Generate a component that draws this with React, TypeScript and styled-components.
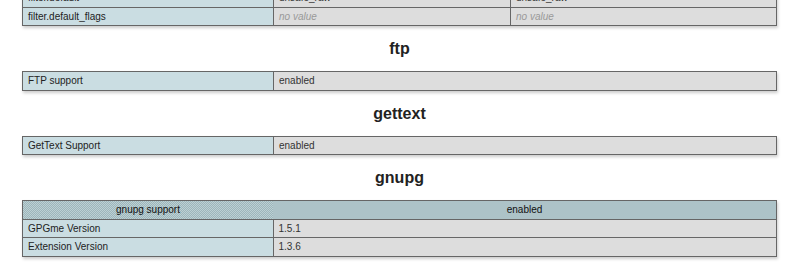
import React from "react";
import styled, { createGlobalStyle } from "styled-components";

const GlobalStyle = createGlobalStyle`
  html, body {
    margin: 0;
    padding: 0;
    background: #fff;
  }
  body {
    font-family: "Liberation Sans", Arial, sans-serif;
    color: #222;
  }
`;

const Page = styled.div`
  padding: 0 15px 0 22px;
  overflow: hidden;
  height: 269px;
`;

const Table = styled.table<{ $first?: boolean }>`
  width: 100%;
  border-collapse: collapse;
  border: 0;
  box-shadow: 1px 2px 3px #ccc;
  margin-top: ${(p) => (p.$first ? "-12px" : "0")};
  table-layout: fixed;
`;

const Cell = styled.td`
  border: 1px solid #666;
  font-size: 10px;
  line-height: 11.5px;
  padding: 3px 5px;
  vertical-align: baseline;
  white-space: nowrap;
  overflow: hidden;
`;

const KeyCell = styled(Cell)`
  background-color: #cadde2;
  width: 240px;
  color: #222;
`;

const ValueCell = styled(Cell)<{ $empty?: boolean }>`
  background-color: #dddddd;
  color: ${(p) => (p.$empty ? "#999" : "#333")};
  font-style: ${(p) => (p.$empty ? "italic" : "normal")};
`;

const HeadRow = styled.tr`
  background-color: #abc3c8;
  background-image: repeating-conic-gradient(#9db6bb 0 25%, #bcd0d4 0 50%);
  background-size: 2px 2px;
`;

const HeadCell = styled.th`
  border-top: 1px solid #666;
  border-bottom: 1px solid #666;
  border-left: 0;
  border-right: 0;
  &:first-child {
    border-left: 1px solid #666;
  }
  &:last-child {
    border-right: 1px solid #666;
  }
  font-size: 10px;
  line-height: 11.5px;
  padding: 3px 5px;
  font-weight: normal;
  text-align: center;
  color: #111;
`;

const SectionTitle = styled.h2`
  margin: 13px 0 12px;
  font-size: 16px;
  line-height: 20px;
  font-weight: bold;
  text-align: center;
  color: #222;
`;

type Row = [string, string];

const NO_VALUE = "no value";

const Value = ({ children }: { children: string }) => (
  <ValueCell $empty={children === NO_VALUE}>{children}</ValueCell>
);

const InfoTable = ({
  rows,
  header,
}: {
  rows: Row[];
  header?: Row;
}) => (
  <Table>
    <tbody>
      {header && (
        <HeadRow>
          <HeadCell style={{ width: 240 }}>{header[0]}</HeadCell>
          <HeadCell>{header[1]}</HeadCell>
        </HeadRow>
      )}
      {rows.map(([k, v]) => (
        <tr key={k}>
          <KeyCell>{k}</KeyCell>
          <Value>{v}</Value>
        </tr>
      ))}
    </tbody>
  </Table>
);

export default function App() {
  return (
    <>
      <GlobalStyle />
      <Page>
        <Table $first>
          <tbody>
            <tr>
              <KeyCell>filter.default</KeyCell>
              <ValueCell style={{ width: 226 }}>unsafe_raw</ValueCell>
              <ValueCell>unsafe_raw</ValueCell>
            </tr>
            <tr>
              <KeyCell>filter.default_flags</KeyCell>
              <Value>{NO_VALUE}</Value>
              <Value>{NO_VALUE}</Value>
            </tr>
          </tbody>
        </Table>

        <SectionTitle>ftp</SectionTitle>
        <InfoTable rows={[["FTP support", "enabled"]]} />

        <SectionTitle>gettext</SectionTitle>
        <InfoTable rows={[["GetText Support", "enabled"]]} />

        <SectionTitle>gnupg</SectionTitle>
        <InfoTable
          header={["gnupg support", "enabled"]}
          rows={[
            ["GPGme Version", "1.5.1"],
            ["Extension Version", "1.3.6"],
          ]}
        />
      </Page>
    </>
  );
}
